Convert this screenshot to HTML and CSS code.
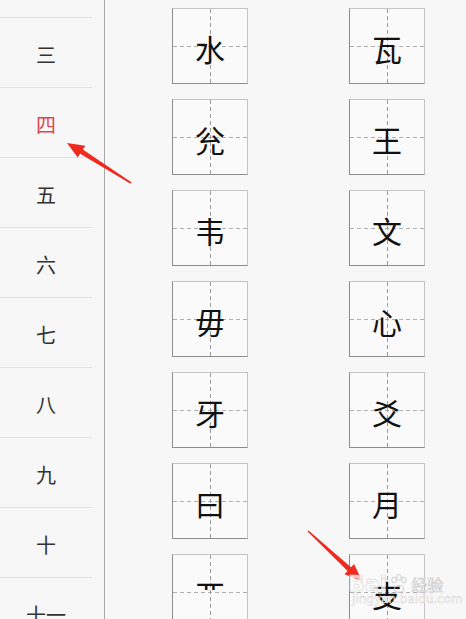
FILE: index.html
```html
<!doctype html>
<html lang="zh">
<head>
    <meta charset="UTF-8">
    <meta name="viewport" content="width=device-width, initial-scale=1.0">
    <title>生字表</title>
    <link rel="stylesheet" href="styles.css">
</head>
<body>
    <div class="page">
        <div class="side">
            <ul class="lessons">
                <li>二</li>
                <li>三</li>
                <li class="active">四</li>
                <li>五</li>
                <li>六</li>
                <li>七</li>
                <li>八</li>
                <li>九</li>
                <li>十</li>
                <li>十一</li>
            </ul>
        </div>
        <div class="main">
            <div class="grid">
                <div class="cell"><span>水</span></div>
                <div class="cell"><span>瓦</span></div>
                <div class="cell"><span>兊</span></div>
                <div class="cell"><span>王</span></div>
                <div class="cell"><span>韦</span></div>
                <div class="cell"><span>文</span></div>
                <div class="cell"><span>毋</span></div>
                <div class="cell"><span>心</span></div>
                <div class="cell"><span>牙</span></div>
                <div class="cell"><span>爻</span></div>
                <div class="cell"><span>曰</span></div>
                <div class="cell"><span>月</span></div>
                <div class="cell cut"><span>亚</span></div>
                <div class="cell"><span>支</span></div>
            </div>
        </div>
    </div>

    <!-- annotation arrows drawn over the screenshot -->
    <svg class="marks" width="466" height="619" viewBox="0 0 466 619">
        <polygon points="67,143 85.3,145.7 82.8,149.5 131.4,182.3 130.6,183.7 80.2,153.7 77.7,157.5" fill="#ee2b1e"/>
        <polygon points="362,581 344.5,574.2 347.6,570.9 307.5,531.6 308.5,530.4 351.0,567.3 354.1,564.0" fill="#ee2b1e"/>
    </svg>

    <div class="watermark">
        <div class="wm-top">
            <span class="wm-bai">Bai</span>
            <svg class="wm-paw" width="20" height="20" viewBox="0 0 20 20">
                <ellipse cx="5" cy="6" rx="2.2" ry="3" fill="none" stroke="#ccc" stroke-width="1"/>
                <ellipse cx="10" cy="3.5" rx="2.2" ry="3" fill="none" stroke="#ccc" stroke-width="1"/>
                <ellipse cx="15" cy="6" rx="2.2" ry="3" fill="none" stroke="#ccc" stroke-width="1"/>
                <path d="M5 16 C5 10 15 10 15 16 C15 19 5 19 5 16 Z" fill="none" stroke="#ccc" stroke-width="1"/>
            </svg>
            <span class="wm-jy">经验</span>
        </div>
        <div class="wm-url">jingyan.baidu.com</div>
    </div>
</body>
</html>
```

FILE: styles.css
```css
body {
    margin: 0;
    background-color: #f7f7f7;
    font-family: "Noto Sans CJK SC", "Noto Sans", sans-serif;
    overflow: hidden;
}

.page {
    display: flex;
    height: 619px;
    overflow: hidden;
}

.side {
    width: 104px;
    border-right: 1px solid #a8a8a8;
    flex-shrink: 0;
}

.lessons {
    list-style: none;
    margin: -52px 0 0 0;
    padding: 0;
}

.lessons li {
    width: 92px;
    height: 70px;
    box-sizing: border-box;
    border-bottom: 1px solid #e2e2e2;
    display: flex;
    align-items: center;
    justify-content: center;
    padding-top: 3px;
    font-size: 20px;
    color: #333333;
}

.lessons li.active {
    color: #e0474c;
}

.main {
    flex: 1;
}

.grid {
    display: grid;
    grid-template-columns: 76px 76px;
    column-gap: 101px;
    row-gap: 15px;
    padding: 8px 0 0 67px;
}

.cell {
    width: 76px;
    height: 76px;
    box-sizing: border-box;
    border: 1px solid #c4c4c4;
    border-left-color: #8c8c8c;
    border-bottom-color: #8c8c8c;
    background-color: #fafafa;
    background-image:
        repeating-linear-gradient(to bottom, #9a9a9a 0 4px, transparent 4px 7px),
        repeating-linear-gradient(to right, #b0b0b0 0 4px, transparent 4px 7px);
    background-size: 1px 100%, 100% 1px;
    background-position: center top, left center;
    background-repeat: no-repeat;
    display: flex;
    align-items: center;
    justify-content: center;
}

.cell span {
    font-size: 30px;
    line-height: 1;
    color: #111111;
    padding-top: 4px;
}

.cell.cut {
    align-items: flex-start;
}

.cell.cut span {
    height: 11px;
    overflow: hidden;
    margin-top: 24px;
    padding-top: 0;
}

.marks {
    position: absolute;
    left: 0;
    top: 0;
    pointer-events: none;
}

.watermark {
    position: absolute;
    left: 348px;
    top: 571px;
    pointer-events: none;
    font-family: "DejaVu Sans", "Noto Sans CJK SC", sans-serif;
}

.wm-top {
    display: flex;
    align-items: center;
    gap: 2px;
}

.wm-bai {
    font-size: 22px;
    font-weight: bold;
    color: rgba(255, 255, 255, 0.75);
    -webkit-text-stroke: 0.6px #d4d4d4;
}

.wm-jy {
    font-family: "Noto Sans CJK SC", sans-serif;
    font-size: 16px;
    color: rgba(255, 255, 255, 0.8);
    -webkit-text-stroke: 0.6px #c8c8c8;
}

.wm-url {
    font-size: 12px;
    margin-top: -4px;
    padding-left: 4px;
    color: rgba(255, 255, 255, 0.8);
    -webkit-text-stroke: 0.4px #d0d0d0;
}
```
